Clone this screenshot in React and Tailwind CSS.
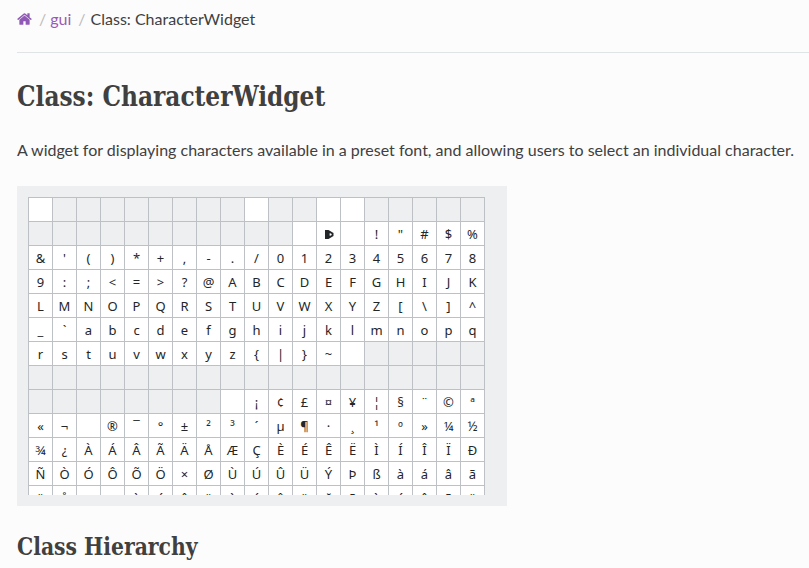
const blank = (count) => Array(count).fill(null);

const range = (from, to) =>
  Array.from({ length: to - from + 1 }, (_, i) => String.fromCharCode(from + i));

// null marks an unavailable glyph; an empty string is an available, invisible one.
const rows = [
  ['', ...blank(8), '', null, null, '', '', ...blank(5)],
  [...blank(11), '', 'marker', '', ...'!"#$%'],
  [..."&'()*+,-./012345678"],
  [...'9:;<=>?@ABCDEFGHIJK'],
  [...'LMNOPQRSTUVWXYZ[\\]^'],
  range(95, 113),
  [...range(114, 126), '', ...blank(5)],
  blank(19),
  [...blank(8), '', ...'¡¢£¤¥¦§¨©ª'],
  ['«', '¬', '', ...'®¯°±²³´µ¶·¸¹º»¼½'],
  [...'¾¿ÀÁÂÃÄÅÆÇÈÉÊËÌÍÎÏÐ'],
  [...'ÑÒÓÔÕÖ×ØÙÚÛÜÝÞßàáâã'],
  [...'äåæçèéêëìíîïðñòóôõö'],
];

function HomeIcon() {
  return (
    <svg viewBox="0 0 1664 1792" className="h-4 w-[15px] fill-[#9159b6]">
      <path d="M1408 992v480q0 26-19 45t-45 19H960v-384H704v384H320q-26 0-45-19t-19-45V992q0-1 .5-3t.5-3l575-474 575 474q1 2 1 6zm223-69l-62 74q-8 9-21 11h-3q-13 0-21-7L832 424l-692 577q-12 8-24 7-13-2-21-11l-62-74q-8-10-7-23.5t11-21.5l719-599q32-26 76-26t76 26l244 204V288q0-14 9-23t23-9h192q14 0 23 9t9 23v408l219 182q10 8 11 21.5t-7 23.5z" />
    </svg>
  );
}

function Marker() {
  return (
    <svg viewBox="0 0 9 9" className="mt-[2px] ml-px h-[9px] w-[9px]">
      <path d="M0 0h3.5l5 3v3l-5 3H0z" fill="#232629" />
      <path d="M4.6 3.2q2 0 2 1.3t-2 1.3z" fill="#fff" />
    </svg>
  );
}

function Cell({ value }) {
  return (
    <div
      className={`flex h-6 w-6 items-center justify-center border-r border-b border-[#bdc1c5] ${
        value === null ? 'bg-[#eeeff1]' : 'bg-white'
      }`}
    >
      {value === 'marker' ? <Marker /> : <span>{value}</span>}
    </div>
  );
}

export default function App() {
  return (
    <main className="h-[568px] w-full overflow-hidden bg-[#fcfcfc] pl-[17px] font-['Lato',sans-serif] text-base leading-6 text-[#404040]">
      <nav className="flex h-[53px] items-start border-b border-[#e1e4e5] pt-[7px]">
        <div className="flex h-6 items-center">
          <HomeIcon />
          <span className="ml-[7px] text-[#bbbbbb]">/</span>
          <a className="ml-1 text-[#9b59b6]">gui</a>
          <span className="ml-[7px] text-[#bbbbbb]">/</span>
          <span className="ml-[5px]">Class: CharacterWidget</span>
        </div>
      </nav>
      <h1 className="mt-[24px] h-10 origin-left scale-x-[0.925] whitespace-nowrap font-['Roboto_Slab','DejaVu_Serif_Condensed','DejaVu_Serif',serif] text-[28px] leading-10 font-bold">
        Class: CharacterWidget
      </h1>
      <p className="mt-[21px] whitespace-nowrap">
        A widget for displaying characters available in a preset font, and allowing users to select an individual character.
      </p>
      <section className="mt-6 h-80 w-[490px] bg-[#eeeff1] pt-[11px] pl-[11px]">
        <div className="h-[298px] w-[457px] overflow-hidden border-t border-l border-[#bdc1c5] font-['Noto_Sans',sans-serif] text-[13px] leading-[18px] text-[#232629]">
          {rows.map((row, r) => (
            <div key={r} className="flex">
              {row.map((value, c) => (
                <Cell key={c} value={value} />
              ))}
            </div>
          ))}
        </div>
      </section>
      <h2 className="mt-[23px] origin-left scale-x-[0.942] whitespace-nowrap font-['Roboto_Slab','DejaVu_Serif_Condensed','DejaVu_Serif',serif] text-2xl leading-9 font-bold">
        Class Hierarchy
      </h2>
    </main>
  );
}
